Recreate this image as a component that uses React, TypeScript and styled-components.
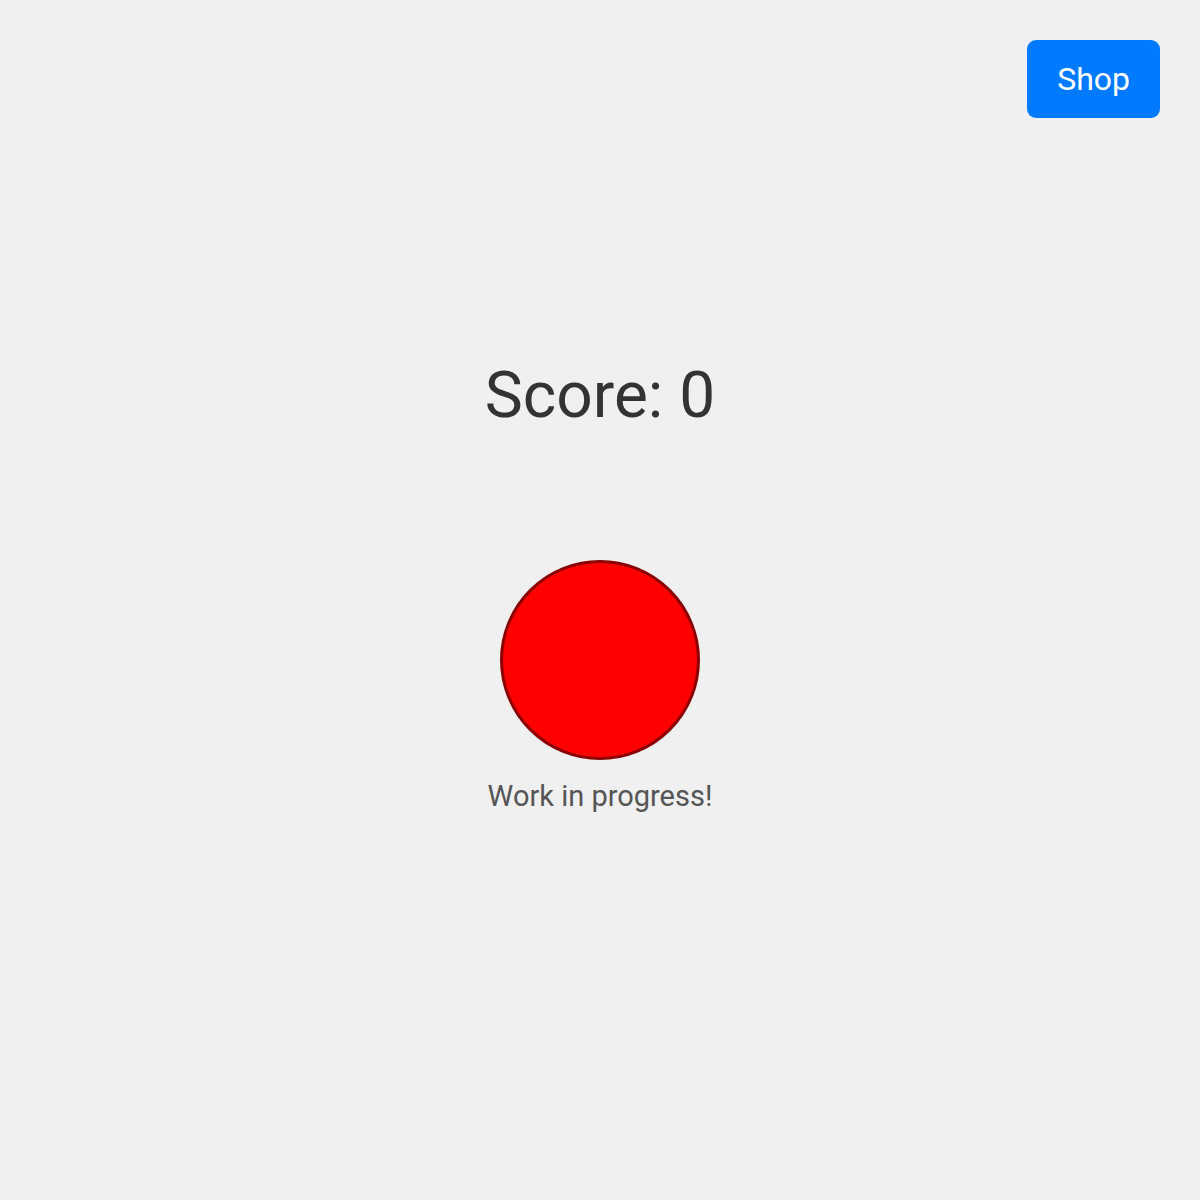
import React, { useState } from 'react';
import styled, { createGlobalStyle } from 'styled-components';

const GlobalStyle = createGlobalStyle`
  html, body {
    margin: 0;
    padding: 0;
    background: #f0f0f0;
    font-family: Roboto, "Liberation Sans", Arial, sans-serif;
  }
`;

const Page = styled.div`
  min-height: 100vh;
  display: flex;
  flex-direction: column;
  align-items: center;
  justify-content: center;
  padding-bottom: 29px;
  box-sizing: border-box;
`;

const ShopButton = styled.button`
  position: fixed;
  top: 40px;
  right: 40px;
  padding: 20px 30px;
  border: none;
  border-radius: 9px;
  background: #007bff;
  color: #fff;
  font-family: inherit;
  font-size: 32px;
  cursor: pointer;
`;

const Score = styled.h1`
  margin: 0 0 127px;
  font-size: 64px;
  font-weight: 400;
  color: #333;
`;

const Clicker = styled.button`
  width: 200px;
  height: 200px;
  border-radius: 50%;
  border: 3px solid #8b0000;
  background: #ff0000;
  padding: 0;
  cursor: pointer;
`;

const Note = styled.p`
  margin: 19px 0 0;
  font-size: 29px;
  color: #555;
`;

export default function App() {
  const [score, setScore] = useState(0);

  return (
    <Page>
      <GlobalStyle />
      <ShopButton>Shop</ShopButton>
      <Score>Score: {score}</Score>
      <Clicker onClick={() => setScore(s => s + 1)} aria-label="Click" />
      <Note>Work in progress!</Note>
    </Page>
  );
}
